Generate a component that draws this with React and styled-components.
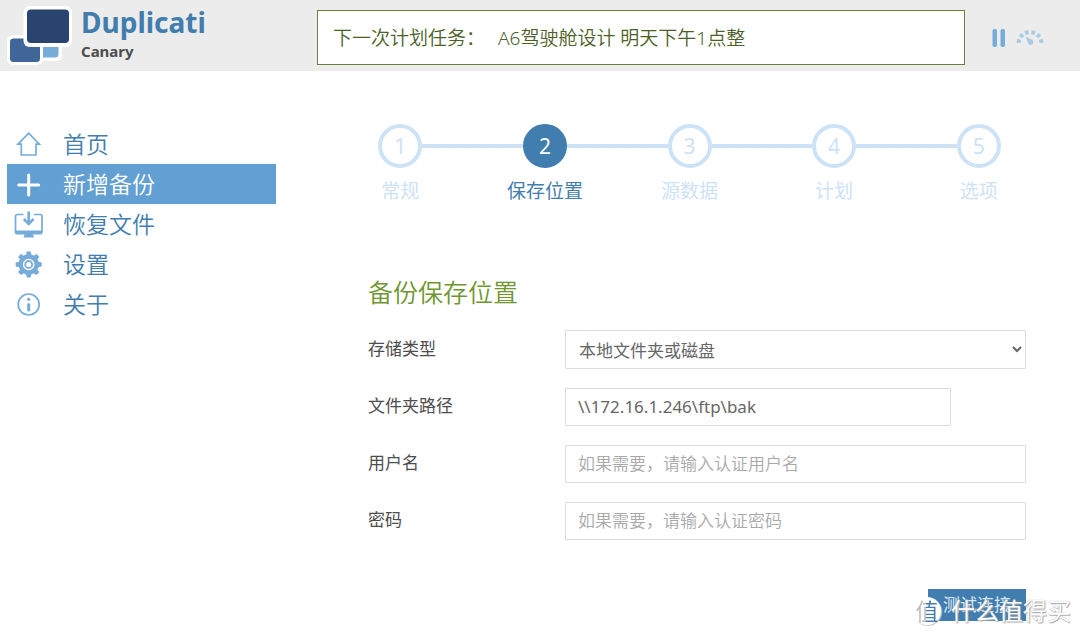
import React from "react";
import styled, { createGlobalStyle, css } from "styled-components";

const GlobalStyle = createGlobalStyle`
  *, *::before, *::after { box-sizing: border-box; }
  body {
    margin: 0;
    background: #fff;
    color: #4d4d4d;
    font-family: "Noto Sans", "Noto Sans CJK SC", sans-serif;
    font-size: 17px;
  }
`;

const Page = styled.div`
  position: relative;
  min-height: 100vh;
`;

const Header = styled.header`
  display: flex;
  align-items: center;
  height: 71px;
  padding: 0 36px 0 7px;
  background: #ececec;
`;

const Brand = styled.a`
  display: flex;
  align-items: flex-start;
  gap: 9px;
  width: 310px;
  height: 71px;
  padding-top: 5px;
  color: #417dae;
  text-decoration: none;
`;

const BrandText = styled.div`
  display: flex;
  flex-direction: column;
  font-weight: 700;
`;

const BrandName = styled.span`
  font-size: 28px;
  line-height: 34px;
`;

const Channel = styled.span`
  color: #4d4d4d;
  font-size: 15px;
  line-height: 24px;
`;

const Status = styled.div`
  display: flex;
  flex: 1;
  align-items: center;
  gap: 13px;
  height: 55px;
  margin-top: 4px;
  padding: 0 15px;
  border: 1px solid #69803d;
  background: #fff;
  color: #4b5f27;
  font-size: 19px;
  font-weight: 350;
  line-height: 28px;
  white-space: nowrap;
`;

const Controls = styled.div`
  display: flex;
  align-items: center;
  gap: 10px;
  margin: 4px 0 0 27px;
`;

const IconButton = styled.button`
  display: flex;
  padding: 0;
  border: 0;
  background: none;
  cursor: pointer;
`;

const Body = styled.div`
  display: flex;
  padding: 53px 29px 0 7px;
`;

const Sidebar = styled.nav`
  flex: 0 0 269px;
  margin-right: 52px;
`;

const NavItem = styled.a`
  display: flex;
  align-items: center;
  gap: 19px;
  height: 40px;
  padding: 0 7px;
  color: ${(p) => (p.$active ? "#fff" : "#417dae")};
  background: ${(p) => (p.$active ? "#629fd3" : "transparent")};
  font-size: 23px;
  font-weight: 350;
  line-height: 40px;
  text-decoration: none;
`;

const Main = styled.main`
  flex: 1;
  min-width: 0;
`;

const Steps = styled.ol`
  display: grid;
  grid-template-columns: repeat(5, 1fr);
  margin: 0;
  padding: 0;
  list-style: none;
`;

const Step = styled.li`
  display: flex;
  flex-direction: column;
  gap: 9px;
  color: ${(p) => (p.$active ? "#417dae" : "#cde3f5")};
  font-size: 19px;
  line-height: 28px;
  text-align: center;
`;

const StepTrack = styled.div`
  display: flex;
  align-items: center;
`;

const Line = styled.span`
  flex: 1;
  height: 4px;
  background: ${(p) => (p.$hidden ? "transparent" : "#cde3f5")};
`;

const Circle = styled.span`
  width: 44px;
  height: 44px;
  border: 4px solid #cde3f5;
  border-radius: 50%;
  font-size: 21px;
  line-height: 36px;
  ${(p) =>
    p.$active &&
    css`
      border-color: #417dae;
      background: #417dae;
      color: #fff;
    `}
`;

const Form = styled.form`
  padding: 69px 25px 0 40px;
`;

const Heading = styled.h2`
  margin: 0 0 20px;
  color: #6f962f;
  font-size: 25px;
  font-weight: 350;
  line-height: 36px;
`;

const Field = styled.div`
  display: flex;
  align-items: center;
  margin-bottom: 19px;
`;

const Label = styled.label`
  flex: 0 0 197px;
  padding-bottom: 2px;
  line-height: 36px;
`;

const control = css`
  flex: 1;
  min-width: 0;
  height: 38px;
  margin: 0 ${(p) => (p.$short ? "75px" : "0")} 0 0;
  border: 1px solid #dcdcdc;
  border-radius: 1px;
  background: #fff;
  color: #666;
  font: inherit;
  outline: none;
`;

const Input = styled.input`
  ${control}
  padding: 0 12px 2px;

  &::placeholder { color: #a9a9a9; font-weight: 350; opacity: 1; }
`;

const Select = styled.select`
  ${control}
  height: 39px;
  padding: 2px 0 0 9px;
`;

const Actions = styled.div`
  display: flex;
  justify-content: flex-end;
  padding-top: 30px;
`;

const TestButton = styled.button`
  height: 32px;
  padding: 0 15px;
  border: 0;
  background: #417dae;
  color: #dbe8f3;
  font: inherit;
  line-height: 32px;
`;

const Watermark = styled.div`
  position: absolute;
  right: 9px;
  bottom: 10px;
  display: flex;
  align-items: center;
  gap: 10px;
  color: #fff;
  font-size: 24px;
  line-height: 32px;
  text-shadow: 0 0 1px #999, 1px 1px 1px #aaa;
  pointer-events: none;
`;

const Badge = styled.span`
  display: flex;
  align-items: center;
  justify-content: center;
  width: 28px;
  height: 28px;
  border-radius: 50%;
  background: #fff;
  box-shadow: 1px 1px 1px #ccc;
  font-size: 23px;
  line-height: 28px;
  text-shadow: none;
`;

const BadgeText = styled.span`
  background: linear-gradient(90deg, #bbb 45%, #417dae 45%);
  background-clip: text;
  color: transparent;
`;

const Logo = () => (
  <svg width="65" height="61" viewBox="7 5 65 61" aria-hidden="true">
    <rect x="38" y="40" width="24" height="21" rx="5" fill="#fff" />
    <rect x="7" y="35" width="36" height="30" rx="6" fill="#fff" />
    <rect x="10" y="38.500" width="30" height="23.500" rx="3.500" fill="#40669a" />
    <path d="M43 46h15.500v8a3.500 3.500 0 0 1-3.500 3.500H43z" fill="#76acd9" />
    <rect x="23.500" y="6" width="48.500" height="41" rx="6" fill="#fff" />
    <rect x="27" y="9.500" width="42" height="33.500" rx="4" fill="#29456f" />
  </svg>
);

const PauseIcon = () => (
  <svg width="14" height="18" viewBox="0 0 14 18" fill="#76acd9" aria-hidden="true">
    <rect x="0.500" y="0" width="4.500" height="18" rx="1.800" />
    <rect x="8.500" y="0" width="4.500" height="18" rx="1.800" />
  </svg>
);

const GaugeIcon = () => (
  <svg width="28" height="18" viewBox="0 0 28 18" fill="#a9cce6" aria-hidden="true">
    {[-78, -47, -16, 16, 47, 78].map((a) => (
      <path key={a} d="M11.900 1.200q2.100-.600 4.200 0l-.600 3.900h-3z" transform={`rotate(${a} 14 14.500)`} />
    ))}
    <path d="M9.600 7.600l6 3a2.800 2.800 0 1 1-3.800 3z" />
  </svg>
);

const NavIcon = ({ children, color = "#76acd9" }) => (
  <svg width="30" height="30" viewBox="0 0 30 30" fill="none" stroke={color} strokeWidth="2" aria-hidden="true">
    {children}
  </svg>
);

const gearTeeth = [0, 45, 90, 135, 180, 225, 270, 315];

const icons = {
  home: (
    <NavIcon>
      <path d="M4 15.200L14.700 4.200 25.400 15.200H22V26H7.300V15.200z" strokeWidth="1.700" />
    </NavIcon>
  ),
  add: (
    <NavIcon color="#fff">
      <path d="M14.700 6v20M4.700 16h20" strokeWidth="3" strokeLinecap="round" />
    </NavIcon>
  ),
  restore: (
    <NavIcon>
      <path d="M9.500 5.500H3.500a2 2 0 0 0-2 2v15M20 5.500h6a2 2 0 0 1 2 2v15" strokeWidth="1.700" />
      <path d="M.700 21.500h28v2a2 2 0 0 1-2 2H19l1 3H9.500l1-3H2.700a2 2 0 0 1-2-2z" fill="#76acd9" stroke="none" />
      <path d="M14.700 2.500v12.500M9.800 10l4.900 5 4.900-5" strokeWidth="2.600" />
    </NavIcon>
  ),
  settings: (
    <NavIcon>
      <circle cx="14.700" cy="15.500" r="8" strokeWidth="4.400" />
      {gearTeeth.map((a) => (
        <path
          key={a}
          d="M11.900 6.500l.600-3.200q.200-.800 1-.800h2.400q.800 0 1 .800l.600 3.200z"
          fill="#76acd9"
          stroke="none"
          transform={`rotate(${a} 14.700 15.500)`}
        />
      ))}
      <circle cx="14.700" cy="15.500" r="3.500" strokeWidth="1.800" />
    </NavIcon>
  ),
  about: (
    <NavIcon>
      <circle cx="14.700" cy="15.500" r="10.500" strokeWidth="1.700" />
      <path d="M14.700 15.500v5.500" strokeWidth="3" strokeLinecap="round" />
      <circle cx="14.700" cy="10.300" r="1.600" fill="#76acd9" stroke="none" />
    </NavIcon>
  ),
};

const navItems = [
  { icon: "home", text: "首页" },
  { icon: "add", text: "新增备份", active: true },
  { icon: "restore", text: "恢复文件" },
  { icon: "settings", text: "设置" },
  { icon: "about", text: "关于" },
];

const steps = ["常规", "保存位置", "源数据", "计划", "选项"];
const currentStep = 1;

export default function App() {
  return (
    <Page>
      <GlobalStyle />
      <Header>
        <Brand href="#home">
          <Logo />
          <BrandText>
            <BrandName>Duplicati</BrandName>
            <Channel>Canary</Channel>
          </BrandText>
        </Brand>
        <Status>
          <span>下一次计划任务：</span>
          <span>A6驾驶舱设计 明天下午1点整</span>
        </Status>
        <Controls>
          <IconButton type="button" aria-label="暂停"><PauseIcon /></IconButton>
          <IconButton type="button" aria-label="限速"><GaugeIcon /></IconButton>
        </Controls>
      </Header>
      <Body>
        <Sidebar>
          {navItems.map((item) => (
            <NavItem key={item.icon} href={`#${item.icon}`} $active={item.active}>
              {icons[item.icon]}
              {item.text}
            </NavItem>
          ))}
        </Sidebar>
        <Main>
          <Steps>
            {steps.map((name, i) => (
              <Step key={name} $active={i === currentStep}>
                <StepTrack>
                  <Line $hidden={i === 0} />
                  <Circle $active={i === currentStep}>{i + 1}</Circle>
                  <Line $hidden={i === steps.length - 1} />
                </StepTrack>
                {name}
              </Step>
            ))}
          </Steps>
          <Form>
            <Heading>备份保存位置</Heading>
            <Field>
              <Label htmlFor="type">存储类型</Label>
              <Select id="type" defaultValue="file">
                <option value="file">本地文件夹或磁盘</option>
              </Select>
            </Field>
            <Field>
              <Label htmlFor="path">文件夹路径</Label>
              <Input id="path" type="text" $short defaultValue={"\\\\172.16.1.246\\ftp\\bak"} />
            </Field>
            <Field>
              <Label htmlFor="user">用户名</Label>
              <Input id="user" type="text" placeholder="如果需要，请输入认证用户名" />
            </Field>
            <Field>
              <Label htmlFor="password">密码</Label>
              <Input id="password" type="password" placeholder="如果需要，请输入认证密码" />
            </Field>
            <Actions>
              <TestButton type="button">测试连接</TestButton>
            </Actions>
          </Form>
        </Main>
      </Body>
      <Watermark>
        <Badge><BadgeText>值</BadgeText></Badge>
        <span>什么值得买</span>
      </Watermark>
    </Page>
  );
}
